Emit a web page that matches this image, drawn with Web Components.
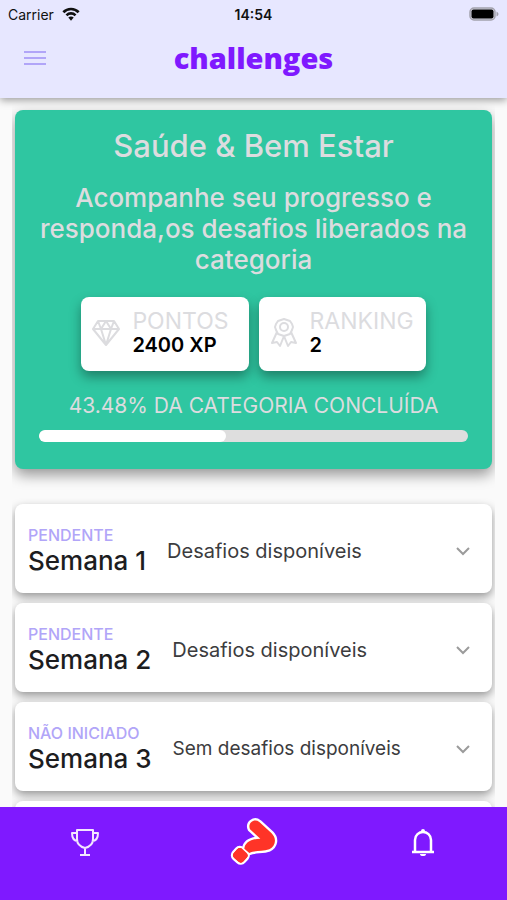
<!DOCTYPE html>
<html lang="pt-BR">

<head>
  <meta charset="UTF-8">
  <meta name="viewport" content="width=device-width, initial-scale=1.0">
  <title>challenges</title>
  <style>
    html,
    body {
      margin: 0;
      height: 100%;
    }

    body {
      font-family: Inter, "Liberation Sans", sans-serif;
      color: #1d1d1f;
      background-color: #fafafa;
      --purple: #7f19ff;
      --lilac: #b1a5f8;
      --green: #2fc6a1;
      --muted: #dcdcdf;
    }
  </style>
</head>

<body>
  <challenge-app>
    <app-header slot="header" carrier="Carrier" time="14:54">challenges</app-header>

    <category-card value="43.48">
      <span slot="title">Saúde &amp; Bem Estar</span>
      <span slot="text">Acompanhe seu progresso e responda,os desafios liberados na categoria</span>
      <stat-box label="PONTOS" value="2400 XP">
        <svg viewBox="0 0 28 26" width="28" height="26" fill="none" stroke="currentColor" stroke-width="2" stroke-linejoin="round">
          <path d="M6 1h16l5 8-13 16L1 9zM1 9h26M6 1l3 8 5-8 5 8 3-8M9 9l5 16 5-16"></path>
        </svg>
      </stat-box>
      <stat-box label="RANKING" value="2">
        <svg viewBox="0 0 28 30" width="28" height="30" fill="none" stroke="currentColor" stroke-width="2" stroke-linejoin="round">
          <path d="M14 1l3 1 3 1 2 3 1 3-1 3-2 4-3 1-3 1-3-1-3-1-2-4-1-3 1-3 2-3 3-1z"></path>
          <circle cx="14" cy="9" r="4"></circle>
          <path d="M7 14L2 25l5-1 3 4 4-10 4 10 3-4 5 1-5-11"></path>
        </svg>
      </stat-box>
    </category-card>

    <week-card status="PENDENTE" name="Semana 1">Desafios disponíveis</week-card>
    <week-card status="PENDENTE" name="Semana 2">Desafios disponíveis</week-card>
    <week-card status="NÃO INICIADO" name="Semana 3" locked>Sem desafios disponíveis</week-card>
    <week-card status="NÃO INICIADO" name="Semana 4" locked>Sem desafios disponíveis</week-card>

    <tab-bar slot="footer">
      <tab-item label="Ranking">
        <svg viewBox="0 0 28 28" width="28" height="28" fill="none" stroke="#f3e6ff" stroke-width="2" stroke-linejoin="round">
          <path d="M6 2h16v9c0 5-4 8-8 9-4-1-8-4-8-9zM6 5H1c0 5 2 8 6 8M22 5h5c0 5-2 8-6 8M14 20v6M9 27h10"></path>
        </svg>
      </tab-item>
      <tab-item label="Desafios">
        <svg viewBox="60 46 144 144" width="48" height="48">
          <g fill="#ff3427" stroke="#fff" stroke-width="14" stroke-linejoin="round" paint-order="stroke">
            <rect x="72" y="140" width="38" height="36" rx="11" transform="rotate(42 91 158)"></rect>
            <path d="M120 80C112 62 132 46 148 58L184 91C202 109 196 130 178 140C156 148 136 142 118 151L103 138C105 120 122 109 151 108Z"></path>
          </g>
          <rect x="72" y="140" width="38" height="36" rx="11" transform="rotate(42 91 158)" fill="#ff3427"></rect>
        </svg>
      </tab-item>
      <tab-item label="Notificações">
        <svg viewBox="0 0 26 30" width="26" height="30">
          <path d="M5 24V13c0-5 4-8 8-8s8 3 8 8v11M2 25h22" fill="none" stroke="#fff" stroke-width="2.500"></path>
          <path d="M11 4a2 2 0 0 1 4 0v2h-4zM10 27h6a3 2 0 0 1-6 0z" fill="#fff"></path>
        </svg>
      </tab-item>
    </tab-bar>
  </challenge-app>

  <template id="challenge-app-template">
    <style>
      :host {
        display: flex;
        flex-direction: column;
        height: 100%;
      }

      main {
        flex: 1;
        min-height: 0;
        overflow: hidden;
        margin: 0 12px;
        padding: 12px 3px 0;
      }
    </style>
    <slot name="header"></slot>
    <main><slot></slot></main>
    <slot name="footer"></slot>
  </template>

  <template id="app-header-template">
    <style>
      :host {
        display: block;
        position: relative;
        z-index: 1;
        background-color: #e7e7ff;
        box-shadow: 0 2px 8px rgba(0, 0, 0, .4);
      }

      .status,
      .bar {
        display: grid;
        grid-template-columns: 1fr auto 1fr;
        align-items: center;
      }

      .status {
        height: 28px;
        padding: 0 8px;
        font-size: 14px;
        color: #111;
      }

      .carrier {
        display: flex;
        align-items: center;
        gap: 8px;
      }

      .time {
        font-weight: 600;
      }

      .battery {
        justify-self: end;
      }

      .bar {
        height: 70px;
        padding: 0 16px 10px;
        box-sizing: border-box;
      }

      h1 {
        margin: 0;
        font: 800 29px/40px "Open Sans", "Noto Sans", sans-serif;
        color: var(--purple);
      }

      button {
        justify-self: start;
        display: flex;
        padding: 8px;
        border: none;
        background: none;
        color: var(--lilac);
        cursor: pointer;
      }
    </style>
    <div class="status">
      <span class="carrier">
        <span id="carrier"></span>
        <svg viewBox="0 0 20 15" width="18" height="14" fill="none" stroke="#111" stroke-width="3">
          <path d="M1.500 5.500a12 12 0 0 1 17 0M5 9a7 7 0 0 1 10 0"></path>
          <path d="M7 11.500a4 4 0 0 1 6 0L10 15z" fill="#111" stroke="none"></path>
        </svg>
      </span>
      <span class="time" id="time"></span>
      <svg class="battery" viewBox="0 0 30 14" width="30" height="14">
        <rect x="1" y="1" width="25" height="12" rx="4" fill="#d5d4e2" stroke="#a3a2ad" stroke-width="1.500"></rect>
        <rect x="2.500" y="2.500" width="22" height="9" rx="2" fill="#000"></rect>
        <path d="M27.500 4.500q2 1 2 2.500t-2 2.500z" fill="#a3a2ad"></path>
      </svg>
    </div>
    <div class="bar">
      <button type="button" aria-label="Menu">
        <svg viewBox="0 0 22 16" width="22" height="16" stroke="currentColor" stroke-width="2">
          <path d="M0 2h22M0 8h22M0 14h22"></path>
        </svg>
      </button>
      <h1><slot></slot></h1>
    </div>
  </template>

  <template id="category-card-template">
    <style>
      :host {
        display: block;
        margin-bottom: 35px;
        padding: 16px 24px 27px;
        border-radius: 8px;
        background-color: var(--green);
        box-shadow: 0 6px 14px rgba(0, 0, 0, .4);
        color: var(--muted);
        text-align: center;
      }

      h2 {
        margin: 0 0 16px;
        font-size: 31px;
        line-height: 40px;
        font-weight: 500;
      }

      p {
        margin: 0 0 22px;
        font-size: 26px;
        line-height: 31px;
        font-weight: 500;
      }

      .stats {
        display: grid;
        grid-template-columns: 1fr 1fr;
        gap: 10px;
        width: fit-content;
        margin: 0 auto 23px;
      }

      label {
        display: block;
        margin-bottom: 12px;
        font-size: 21px;
        line-height: 24px;
      }

      progress {
        display: block;
        width: 100%;
        height: 12px;
        appearance: none;
        border: none;
      }

      progress::-webkit-progress-bar {
        border-radius: 6px;
        background-color: #dedede;
        overflow: hidden;
      }

      progress::-webkit-progress-value {
        border-radius: 6px;
        background-color: #fff;
      }
    </style>
    <h2><slot name="title"></slot></h2>
    <p><slot name="text"></slot></p>
    <div class="stats"><slot></slot></div>
    <label for="progress"></label>
    <progress id="progress" max="100"></progress>
  </template>

  <template id="stat-box-template">
    <style>
      :host {
        display: flex;
        align-items: center;
        gap: 12px;
        padding: 12px 12px 14px 11px;
        border-radius: 8px;
        background-color: #fff;
        box-shadow: 0 6px 12px rgba(0, 0, 0, .35);
        text-align: left;
        line-height: 24px;
      }

      ::slotted(svg) {
        flex: none;
      }

      div {
        font-size: 23px;
      }

      strong {
        display: block;
        font-size: 20px;
        font-weight: 600;
        color: #000;
      }
    </style>
    <slot></slot>
    <div><span id="label"></span><strong id="value"></strong></div>
  </template>

  <template id="week-card-template">
    <style>
      :host {
        display: block;
        margin-bottom: 10px;
        border-radius: 8px;
        background-color: #fff;
        box-shadow: 0 4px 10px rgba(0, 0, 0, .4);
      }

      button {
        display: flex;
        align-items: center;
        gap: 21px;
        width: 100%;
        padding: 19px 20px 15px 13px;
        border: none;
        background: none;
        font: inherit;
        color: inherit;
        text-align: left;
        cursor: pointer;
      }

      .status {
        display: block;
        font-size: 16px;
        line-height: 24px;
        font-weight: 500;
        color: var(--lilac);
      }

      .name {
        display: block;
        font-size: 26px;
        line-height: 28px;
        padding-bottom: 3px;
        font-weight: 500;
      }

      .text {
        flex: 1;
        font-size: 20px;
        line-height: 24px;
        color: #3c3c3e;
      }

      :host([locked]) .text {
        font-size: 19px;
      }
    </style>
    <button type="button" aria-expanded="false">
      <span><span class="status" id="status"></span><span class="name" id="name"></span></span>
      <span class="text"><slot></slot></span>
      <svg viewBox="0 0 18 12" width="18" height="12" fill="none" stroke="#9b9b9b" stroke-width="2">
        <path d="M3 3l6 6 6-6"></path>
      </svg>
    </button>
  </template>

  <template id="tab-bar-template">
    <style>
      :host {
        display: flex;
        position: relative;
        padding-bottom: 23px;
        background-color: var(--purple);
      }
    </style>
    <slot></slot>
  </template>

  <template id="tab-item-template">
    <style>
      :host {
        flex: 1;
        display: flex;
      }

      button {
        flex: 1;
        display: flex;
        align-items: center;
        justify-content: center;
        height: 70px;
        padding: 0;
        border: none;
        background: none;
        cursor: pointer;
      }
    </style>
    <button type="button"><slot></slot></button>
  </template>

  <script>
    (function () {
      class BaseElement extends HTMLElement {
        constructor() {
          super()
          const template = document.querySelector(`#${this.localName}-template`)
          this.attachShadow({ mode: 'open' }).appendChild(template.content.cloneNode(true))
        }
        $(selector) {
          return this.shadowRoot.querySelector(selector)
        }
        // copy attributes into the elements that have the same id
        fill(...names) {
          names.forEach(name => {
            this.$(`#${name}`).textContent = this.getAttribute(name)
          })
        }
      }

      class ChallengeApp extends BaseElement {}

      class AppHeader extends BaseElement {
        connectedCallback() {
          this.fill('carrier', 'time')
        }
      }

      class CategoryCard extends BaseElement {
        connectedCallback() {
          const value = this.getAttribute('value')
          this.$('label').textContent = `${value}% DA CATEGORIA CONCLUÍDA`
          this.$('progress').value = Number(value)
        }
      }

      class StatBox extends BaseElement {
        connectedCallback() {
          this.fill('label', 'value')
        }
      }

      class WeekCard extends BaseElement {
        connectedCallback() {
          this.fill('status', 'name')
          const button = this.$('button')
          button.addEventListener('click', () => {
            const open = button.getAttribute('aria-expanded') === 'true'
            button.setAttribute('aria-expanded', String(!open))
          })
        }
      }

      class TabBar extends BaseElement {}

      class TabItem extends BaseElement {
        connectedCallback() {
          this.$('button').setAttribute('aria-label', this.getAttribute('label'))
        }
      }

      customElements.define('challenge-app', ChallengeApp)
      customElements.define('app-header', AppHeader)
      customElements.define('category-card', CategoryCard)
      customElements.define('stat-box', StatBox)
      customElements.define('week-card', WeekCard)
      customElements.define('tab-bar', TabBar)
      customElements.define('tab-item', TabItem)
    })()
  </script>
</body>

</html>
